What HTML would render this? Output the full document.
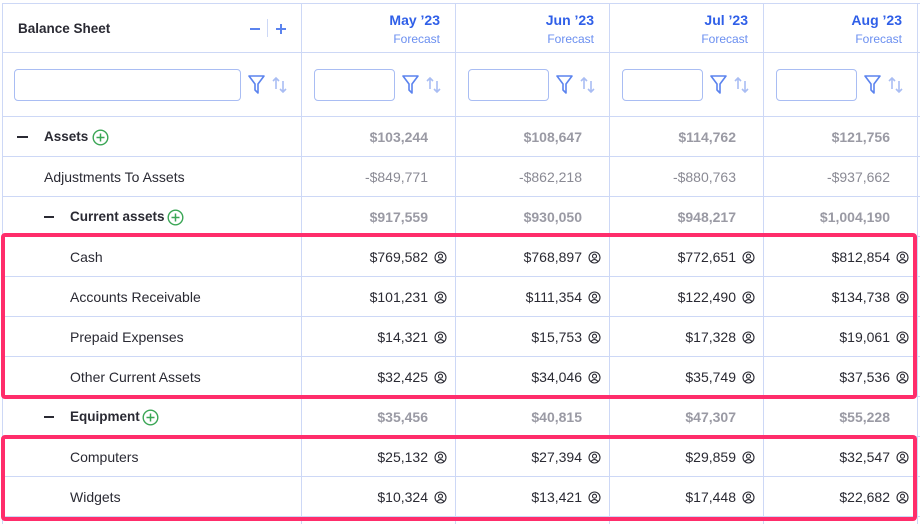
<!DOCTYPE html>
<html><head><style>
body{margin:0;width:920px;height:524px;overflow:hidden;background:#fff;font-family:"Liberation Sans",sans-serif;position:relative}
.vl{position:absolute;top:3px;bottom:0;width:1px;background:#cdd8f6}
.hl{position:absolute;left:2px;right:0;height:1px;background:#cdd8f6}
.t{position:absolute;font-size:14px;color:#2a2a33;white-space:nowrap}
.b{font-weight:bold;font-size:13.5px}
.n{position:absolute;font-size:14px;color:#2a2a33;text-align:right;width:140px;white-space:nowrap}
.g{color:#9a9aa4;font-weight:bold}
.mh{position:absolute;text-align:right;width:140px;color:#2f5fe8;font-weight:bold;font-size:14px}
.fc{position:absolute;text-align:right;width:140px;color:#6b8ff0;font-size:12px}
.inp{position:absolute;top:69px;height:30px;border:1px solid #a9bdf3;border-radius:4px}
.box{position:absolute;border:4px solid #ff2d6b;border-radius:4px}
.ic{position:absolute}
</style></head><body>
<div class="hl" style="top:3px"></div>
<div class="hl" style="top:52px"></div>
<div class="hl" style="top:116px"></div>
<div class="hl" style="top:156px"></div>
<div class="hl" style="top:196px"></div>
<div class="hl" style="top:236px"></div>
<div class="hl" style="top:276px"></div>
<div class="hl" style="top:316px"></div>
<div class="hl" style="top:356px"></div>
<div class="hl" style="top:396px"></div>
<div class="hl" style="top:436px"></div>
<div class="hl" style="top:476px"></div>
<div class="hl" style="top:516px"></div>
<div class="vl" style="left:2px"></div>
<div class="vl" style="left:301px"></div>
<div class="vl" style="left:455px"></div>
<div class="vl" style="left:609px"></div>
<div class="vl" style="left:763px"></div>
<div class="vl" style="left:917px"></div>

<div class="t b" style="left:18px;top:21px">Balance Sheet</div>
<div style="position:absolute;left:250px;top:28px;width:10px;height:2px;background:#5b83ee"></div>
<div style="position:absolute;left:267px;top:19px;width:1px;height:18px;background:#cdd8f6"></div>
<div style="position:absolute;left:276px;top:28px;width:10px;height:2px;background:#5b83ee"></div>
<div style="position:absolute;left:280px;top:24px;width:2px;height:10px;background:#5b83ee"></div>

<div class="inp" style="left:14px;width:225px"></div>
<div class="inp" style="left:314px;width:79px"></div>
<div class="inp" style="left:468px;width:79px"></div>
<div class="inp" style="left:622px;width:79px"></div>
<div class="inp" style="left:776px;width:79px"></div>

<div id="icons"></div>

<div class="mh" style="left:300px;top:12px">May ’23</div><div class="fc" style="left:300px;top:32px">Forecast</div>
<div class="mh" style="left:454px;top:12px">Jun ’23</div><div class="fc" style="left:454px;top:32px">Forecast</div>
<div class="mh" style="left:608px;top:12px">Jul ’23</div><div class="fc" style="left:608px;top:32px">Forecast</div>
<div class="mh" style="left:762px;top:12px">Aug ’23</div><div class="fc" style="left:762px;top:32px">Forecast</div>

<div style="position:absolute;left:17px;top:136px;width:11px;height:2px;background:#2a2a33"></div>
<div class="t b" style="left:44px;top:129px">Assets</div>
<svg class="ic" style="left:92px;top:129px" width="17" height="17"><circle cx="8.5" cy="8.5" r="7.3" fill="none" stroke="#3aa655" stroke-width="1.4"/><path d="M8.5 4.5V12.5M4.5 8.5H12.5" stroke="#3aa655" stroke-width="1.5"/></svg>
<div class="t" style="left:44px;top:169px">Adjustments To Assets</div>
<div style="position:absolute;left:44px;top:216px;width:10px;height:2px;background:#2a2a33"></div>
<div class="t b" style="left:70px;top:209px">Current assets</div>
<svg class="ic" style="left:167px;top:209px" width="17" height="17"><circle cx="8.5" cy="8.5" r="7.3" fill="none" stroke="#3aa655" stroke-width="1.4"/><path d="M8.5 4.5V12.5M4.5 8.5H12.5" stroke="#3aa655" stroke-width="1.5"/></svg>
<div class="t" style="left:70px;top:249px">Cash</div>
<div class="t" style="left:70px;top:289px">Accounts Receivable</div>
<div class="t" style="left:70px;top:329px">Prepaid Expenses</div>
<div class="t" style="left:70px;top:369px">Other Current Assets</div>
<div style="position:absolute;left:44px;top:416px;width:10px;height:2px;background:#2a2a33"></div>
<div class="t b" style="left:70px;top:409px">Equipment</div>
<svg class="ic" style="left:142px;top:409px" width="17" height="17"><circle cx="8.5" cy="8.5" r="7.3" fill="none" stroke="#3aa655" stroke-width="1.4"/><path d="M8.5 4.5V12.5M4.5 8.5H12.5" stroke="#3aa655" stroke-width="1.5"/></svg>
<div class="t" style="left:70px;top:449px">Computers</div>
<div class="t" style="left:70px;top:489px">Widgets</div>

<div id="nums"></div>
<div class="box" style="left:1px;top:233px;width:908px;height:158px"></div>
<div class="box" style="left:1px;top:435px;width:908px;height:78px"></div>
<script>
var fi='';
[248,402,556,710,864].forEach(function(x){fi+='<div class="ic" style="left:'+x+'px;top:75px"><svg width="44" height="20"><path d="M1 1H16L10 9V18L7 15V9Z" fill="none" stroke="#5b83ee" stroke-width="1.6" stroke-linejoin="round"/><path d="M28 14V3M25 6L28 3L31 6M35 6V17M32 14L35 17L38 14" fill="none" stroke="#a9bdf3" stroke-width="1.6"/></svg></div>';});
document.getElementById('icons').innerHTML=fi;
var cols=[301,455,609,763];
var rows=[
[129,'g',['$103,244','$108,647','$114,762','$121,756']],
[169,'a',['-$849,771','-$862,218','-$880,763','-$937,662']],
[209,'g',['$917,559','$930,050','$948,217','$1,004,190']],
[249,'i',['$769,582','$768,897','$772,651','$812,854']],
[289,'i',['$101,231','$111,354','$122,490','$134,738']],
[329,'i',['$14,321','$15,753','$17,328','$19,061']],
[369,'i',['$32,425','$34,046','$35,749','$37,536']],
[409,'g',['$35,456','$40,815','$47,307','$55,228']],
[449,'i',['$25,132','$27,394','$29,859','$32,547']],
[489,'i',['$10,324','$13,421','$17,448','$22,682']]];
var h='';
rows.forEach(function(r){cols.forEach(function(c,i){
if(r[1]=='a')h+='<div class="n" style="color:#8a8a94;left:'+(c-13)+'px;top:'+r[0]+'px">'+r[2][i]+'</div>';
else h+='<div class="n'+(r[1]=='g'?' g':'')+'" style="left:'+(c-13)+'px;top:'+r[0]+'px">'+r[2][i]+'</div>';
if(r[1]=='i')h+='<svg class="ic" style="left:'+(c+133)+'px;top:'+(r[0]+2)+'px" width="13" height="13"><circle cx="6.5" cy="6.5" r="5.5" fill="none" stroke="#2a2a33" stroke-width="1.1"/><circle cx="6.5" cy="5.2" r="2" fill="none" stroke="#2a2a33" stroke-width="1.1"/><path d="M3 10.5Q6.5 6.5 10 10.5" fill="none" stroke="#2a2a33" stroke-width="1.1"/></svg>';
});});
document.getElementById('nums').innerHTML=h;
</script>
</body></html>
